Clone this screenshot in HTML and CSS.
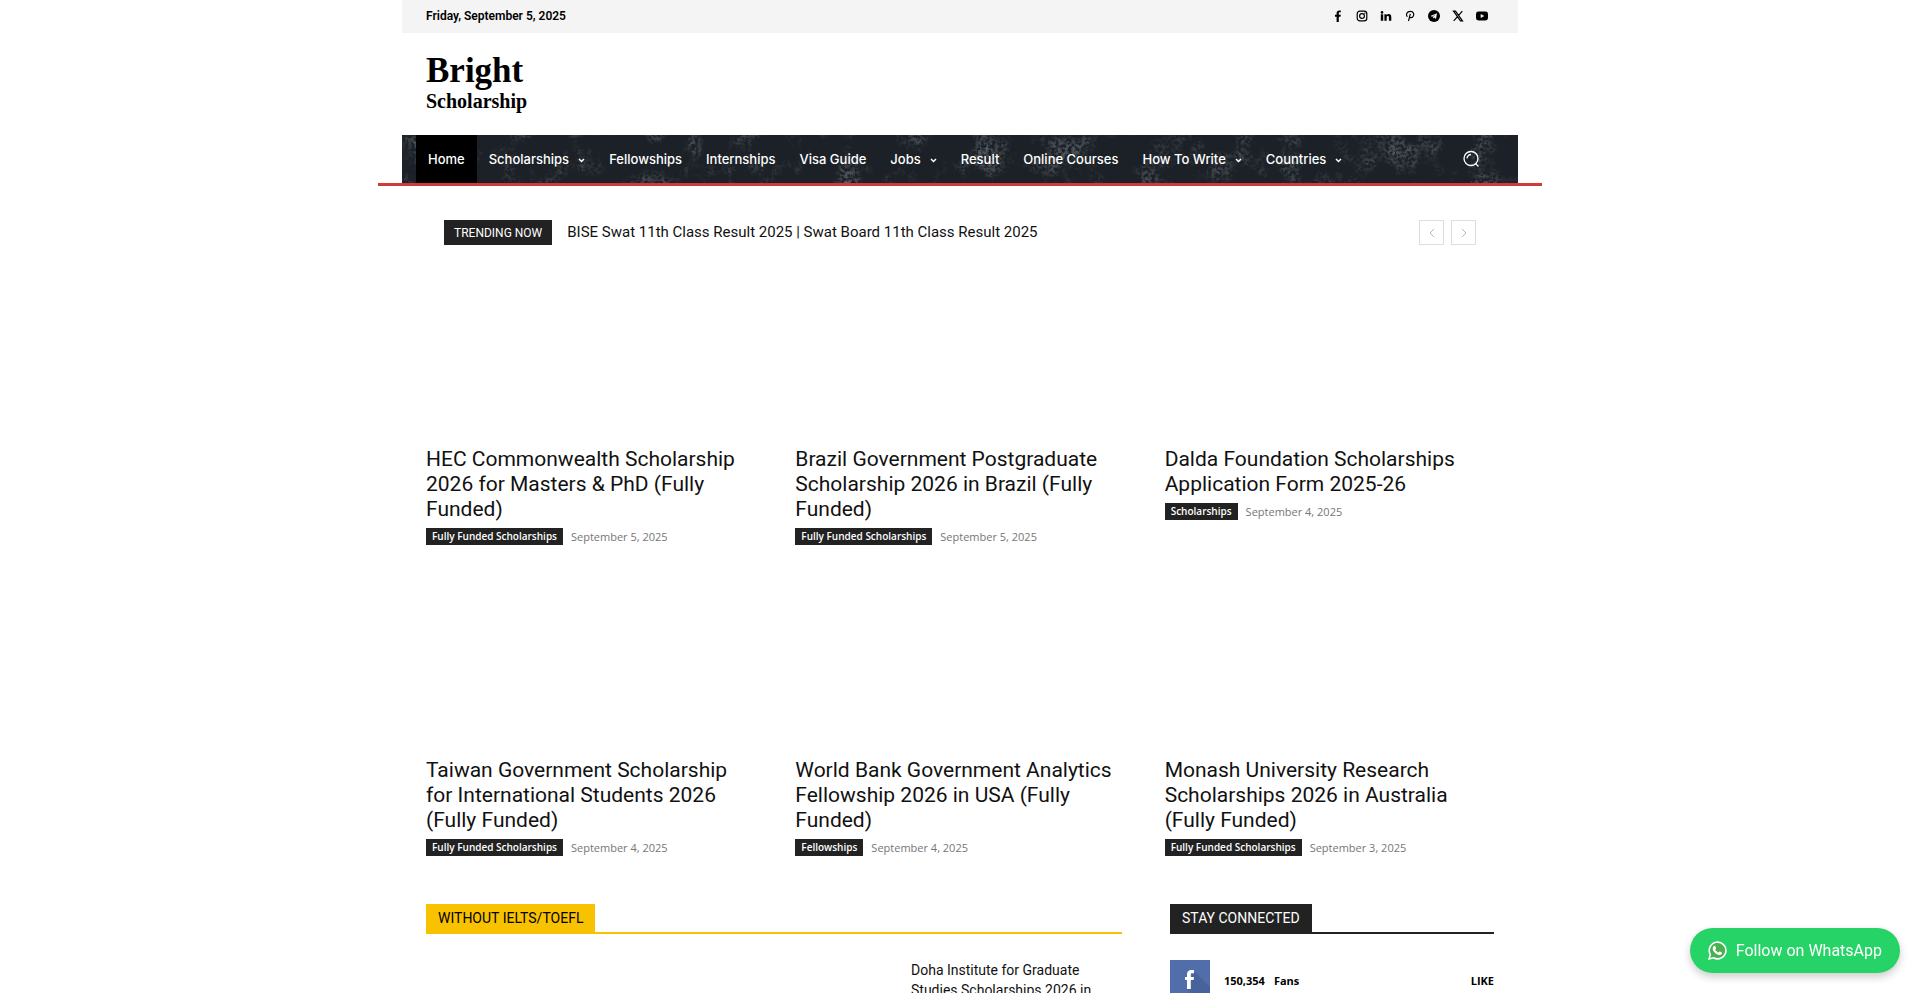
FILE: index.html
```html
<!DOCTYPE html>
<html lang="en">
<head>
    <meta charset="UTF-8">
    <meta name="viewport" content="width=device-width, initial-scale=1.0">
    <title>Bright Scholarship</title>
    <link rel="stylesheet" href="styles.css">
</head>
<body>
    <header class="header">
        <div class="top-bar">
            <span class="date">Friday, September 5, 2025</span>
            <div class="social">
                <a href="#" aria-label="Facebook"><svg viewBox="0 0 12 12"><path d="M4.6 12V6.7H3V4.7h1.6V3.2C4.6 1.300 5.700.4 7.300.4h1.500v1.900h-1c-.8 0-1 .4-1 1v1.400h2l-.3 2H6.800V12z"/></svg></a>
                <a href="#" aria-label="Instagram"><svg viewBox="0 0 12 12" class="line"><rect x="1.200" y="1.200" width="9.600" height="9.600" rx="2.600"/><circle cx="6" cy="6" r="2.400"/><circle cx="8.800" cy="3.200" r=".2"/></svg></a>
                <a href="#" aria-label="LinkedIn"><svg viewBox="0 0 12 12"><circle cx="2" cy="2.400" r="1.300"/><path d="M.8 4.300h2.400v6.400H.8zM4.400 4.300h2.200v.9c.4-.7 1.100-1.100 2-1.100 2 0 2.700 1.200 2.700 3.200v3.400H8.900V7.600c0-1-.2-1.600-1.100-1.600S6.700 6.700 6.700 7.600v3.100H4.400z"/></svg></a>
                <a href="#" aria-label="Pinterest"><svg viewBox="0 0 12 12" class="line"><path d="M3.300 6.800C1.400 4.600 3 1.400 6.200 1.400c3.700 0 4.300 3.200 2.800 5.200C7.900 8 5.900 7.900 5.400 6.700M6.300 3.900L4.500 11"/></svg></a>
                <a href="#" aria-label="Telegram"><svg viewBox="0 0 12 12"><circle cx="6" cy="6" r="6"/><path class="cut" d="M2.400 6L9 3.200 8 9 6.100 7.500 5.100 8.600 4.900 6.900 7.600 4.500 4.200 6.700z"/></svg></a>
                <a href="#" aria-label="X"><svg viewBox="0 0 12 12" class="line"><path d="M1.500 1.200h2l7 9.600h-2zM10.300 1.200L6.700 5.400M5.300 6.800L1.700 10.800"/></svg></a>
                <a href="#" aria-label="YouTube"><svg viewBox="0 0 12 12"><rect y="1.500" width="12" height="9" rx="2.400"/><path class="cut" d="M4.700 3.900L8.300 6 4.700 8.100z"/></svg></a>
            </div>
        </div>

        <a href="#" class="logo">
            <span class="logo-main">Bright</span>
            <span class="logo-sub">Scholarship</span>
        </a>

        <nav class="nav">
            <svg class="nav-texture" aria-hidden="true">
                <filter id="grain" x="0" y="0" width="100%" height="100%">
                    <feTurbulence type="fractalNoise" baseFrequency="0.03 0.025" numOctaves="7" seed="8" result="clouds"/>
                    <feColorMatrix values="0 0 0 0 .36  0 0 0 0 .4  0 0 0 0 .41  1.200 0 0 0 -.580" result="patches"/>
                    <feTurbulence type="fractalNoise" baseFrequency="0.3" numOctaves="3" seed="3"/>
                    <feColorMatrix values="0 0 0 0 1  0 0 0 0 1  0 0 0 0 1  0 4 0 0 -1.500" result="dust"/>
                    <feComposite in="patches" in2="dust" operator="in"/>
                </filter>
                <rect width="100%" height="100%" filter="url(#grain)"/>
            </svg>
            <a href="#" class="active">Home</a>
            <a href="#">Scholarships <svg class="caret" viewBox="0 0 7 5"><path d="M1 1l2.500 2.500L6 1"/></svg></a>
            <a href="#">Fellowships</a>
            <a href="#">Internships</a>
            <a href="#">Visa Guide</a>
            <a href="#">Jobs <svg class="caret" viewBox="0 0 7 5"><path d="M1 1l2.500 2.500L6 1"/></svg></a>
            <a href="#">Result</a>
            <a href="#">Online Courses</a>
            <a href="#">How To Write <svg class="caret" viewBox="0 0 7 5"><path d="M1 1l2.500 2.500L6 1"/></svg></a>
            <a href="#">Countries <svg class="caret" viewBox="0 0 7 5"><path d="M1 1l2.500 2.500L6 1"/></svg></a>
            <button type="button" class="search" aria-label="Search">
                <svg viewBox="0 0 18 18"><circle cx="9" cy="8.500" r="7"/><path d="M13.500 13.500l3 3M5 8.500a4 4 0 0 1 4-4"/></svg>
            </button>
        </nav>
    </header>

    <main class="content">
        <div class="trending">
            <span class="trending-label">TRENDING NOW</span>
            <a href="#" class="trending-title">BISE Swat 11th Class Result 2025 | Swat Board 11th Class Result 2025</a>
            <div class="trending-nav">
                <button type="button" aria-label="Previous"><svg viewBox="0 0 6 10"><path d="M5 1L1 5l4 4"/></svg></button>
                <button type="button" aria-label="Next"><svg viewBox="0 0 6 10"><path d="M1 1l4 4-4 4"/></svg></button>
            </div>
        </div>

        <section class="post-grid">
            <article class="post">
                <div class="thumb"></div>
                <h3><a href="#">HEC Commonwealth Scholarship 2026 for Masters &amp; PhD (Fully Funded)</a></h3>
                <div class="meta"><a href="#" class="category">Fully Funded Scholarships</a><time>September 5, 2025</time></div>
            </article>
            <article class="post">
                <div class="thumb"></div>
                <h3><a href="#">Brazil Government Postgraduate Scholarship 2026 in Brazil (Fully Funded)</a></h3>
                <div class="meta"><a href="#" class="category">Fully Funded Scholarships</a><time>September 5, 2025</time></div>
            </article>
            <article class="post">
                <div class="thumb"></div>
                <h3><a href="#">Dalda Foundation Scholarships Application Form 2025-26</a></h3>
                <div class="meta"><a href="#" class="category">Scholarships</a><time>September 4, 2025</time></div>
            </article>
            <article class="post">
                <div class="thumb"></div>
                <h3><a href="#">Taiwan Government Scholarship for International Students 2026 (Fully Funded)</a></h3>
                <div class="meta"><a href="#" class="category">Fully Funded Scholarships</a><time>September 4, 2025</time></div>
            </article>
            <article class="post">
                <div class="thumb"></div>
                <h3><a href="#">World Bank Government Analytics Fellowship 2026 in USA (Fully Funded)</a></h3>
                <div class="meta"><a href="#" class="category">Fellowships</a><time>September 4, 2025</time></div>
            </article>
            <article class="post">
                <div class="thumb"></div>
                <h3><a href="#">Monash University Research Scholarships 2026 in Australia (Fully Funded)</a></h3>
                <div class="meta"><a href="#" class="category">Fully Funded Scholarships</a><time>September 3, 2025</time></div>
            </article>
        </section>

        <div class="columns">
            <section class="main-col">
                <h4 class="block-title yellow"><span>WITHOUT IELTS/TOEFL</span></h4>
                <div class="post-list">
                    <div class="featured"></div>
                    <article class="small-post">
                        <div class="small-thumb"></div>
                        <h3><a href="#">Doha Institute for Graduate Studies Scholarships 2026 in</a></h3>
                    </article>
                </div>
            </section>
            <aside class="side-col">
                <h4 class="block-title"><span>STAY CONNECTED</span></h4>
                <div class="counter">
                    <span class="fb">
                        <svg viewBox="0 0 40 40"><path class="fb-shade" d="M24 11L40 27v13H27L17 29z"/><path class="fb-glyph" d="M17 29V20h-2v-3h2v-2.500c0-3 1.600-4.500 4.400-4.500H24v3.300h-1.800c-1 0-1.400.5-1.400 1.400V17H24l-.4 3h-2.800v9z"/></svg>
                    </span>
                    <span class="count">150,354</span>
                    <span>Fans</span>
                    <a href="#">LIKE</a>
                </div>
            </aside>
        </div>
    </main>

    <a href="#" class="whatsapp">
        <svg viewBox="0 0 18 18"><path class="wa-ring" d="M1 17l1.200-4.100A7.900 7.900 0 1 1 5.200 15.900z"/><path class="wa-phone" d="M6.300 4.600c.4 0 .5.100.7.600l.6 1.400c.1.300 0 .5-.8 1.400.7 1.400 1.700 2.300 3.200 3 .9-1 1-1.200 1.400-1l1.600.8c.4.200.4.300.3.900-.2 1-1.300 1.700-2.400 1.600-3.500-.5-6.700-3.900-6.400-6.500.1-.9.900-2.200 1.800-2.200z"/></svg>
        Follow on WhatsApp
    </a>
</body>
</html>
```
FILE: styles.css
```css
* {
    box-sizing: border-box;
}

body {
    margin: 0;
    height: 100vh;
    overflow: hidden;
    background: #fff;
    color: #111;
    font-family: Roboto, sans-serif;
}

a {
    color: inherit;
    text-decoration: none;
}

button {
    padding: 0;
    background: none;
    border: none;
    cursor: pointer;
}

h3, h4 {
    margin: 0;
    font-weight: 400;
}

/* Header */
.header {
    max-width: 1164px;
    margin: 0 auto;
    padding: 0 24px;
    border-bottom: 3px solid #d13a3a;
}

.top-bar {
    display: flex;
    justify-content: space-between;
    align-items: center;
    height: 33px;
    padding: 0 24px 2px;
    background: #f4f4f4;
}

.date {
    font-size: 12px;
    font-weight: 600;
    color: #000;
}

.social {
    display: flex;
}

.social a {
    display: flex;
    justify-content: center;
    width: 24px;
}

.social svg {
    width: 12px;
    height: 12px;
}

.social .line {
    fill: none;
    stroke: #000;
    stroke-width: 1.2;
}

.social .cut {
    fill: #f4f4f4;
}

.logo {
    display: flex;
    flex-direction: column;
    height: 102px;
    padding: 18px 24px;
    color: #000;
    font-family: "Liberation Serif", serif;
    font-weight: 700;
}

.logo-main {
    font-size: 35px;
    line-height: 40px;
}

.logo-sub {
    font-size: 20px;
    line-height: 20px;
}

.nav {
    position: relative;
    display: flex;
    height: 48px;
    padding: 0 38px 0 14px;
    background: #1b2127;
    color: #fff;
    font-family: Inter, sans-serif;
    font-size: 13px;
    font-weight: 500;
}

.nav-texture {
    position: absolute;
    inset: 0;
    width: 100%;
    height: 100%;
}

.nav a {
    position: relative;
    display: flex;
    align-items: center;
    gap: 9px;
    padding: 0 12px;
    white-space: nowrap;
}

.nav .active {
    background: #000;
}

.caret {
    width: 7px;
    height: 5px;
    margin-top: 2px;
    fill: none;
    stroke: #fff;
    stroke-width: 1.5;
}

.search {
    position: relative;
    display: flex;
    align-items: center;
    margin-left: auto;
}

.search svg {
    width: 18px;
    height: 18px;
    fill: none;
    stroke: #fff;
    stroke-width: 1.3;
}

/* Content */
.content {
    max-width: 1116px;
    margin: 0 auto;
    padding: 34px 24px 0;
}

.trending {
    display: flex;
    align-items: center;
    padding: 0 18px;
}

.trending-label {
    padding: 1px 10px 0;
    background: #222;
    color: #fff;
    font-size: 12px;
    line-height: 24px;
}

.trending-title {
    margin-left: 15px;
    padding-bottom: 1px;
    font-size: 15px;
    line-height: 24px;
}

.trending-nav {
    display: flex;
    gap: 7px;
    margin-left: auto;
}

.trending-nav button {
    display: flex;
    justify-content: center;
    align-items: center;
    width: 25px;
    height: 25px;
    border: 1px solid #ddd;
}

.trending-nav svg {
    width: 6px;
    height: 10px;
    fill: none;
    stroke: #b5b5b5;
}

.post-grid {
    display: grid;
    grid-template-columns: repeat(3, 1fr);
    gap: 11px 40px;
}

.thumb {
    height: 198px;
}

.post h3 {
    margin: 4px 0 6px;
    font-size: 21px;
    line-height: 25px;
}

.meta {
    display: flex;
    align-items: center;
    gap: 8px;
    font-family: "Open Sans", sans-serif;
    font-size: 11px;
    line-height: 17px;
    color: #767676;
}

.category {
    padding: 0 6px;
    background: #222;
    color: #fff;
    font-size: 10px;
    font-weight: 600;
}

.columns {
    display: grid;
    grid-template-columns: 696fr 324fr;
    gap: 48px;
    margin-top: 48px;
}

.block-title {
    display: flex;
    margin-bottom: 26px;
    border-bottom: 2px solid #222;
    font-size: 14px;
    line-height: 28px;
}

.block-title span {
    padding: 0 12px;
    background: #222;
    color: #fff;
}

.block-title.yellow {
    border-color: #f8c200;
}

.block-title.yellow span {
    background: #f8c200;
    color: #000;
}

.post-list {
    display: grid;
    grid-template-columns: 1fr 1fr;
    gap: 48px;
}

.small-post {
    display: flex;
    gap: 16px;
}

.small-thumb {
    flex: none;
    width: 97px;
}

.small-post h3 {
    font-size: 14px;
    line-height: 20px;
}

.counter {
    display: flex;
    align-items: center;
    color: #000;
    font-family: "Open Sans", sans-serif;
    font-size: 11px;
    font-weight: 700;
}

.counter a {
    margin-left: auto;
}

.fb {
    width: 40px;
    height: 40px;
    background: #516eab;
}

.fb-shade {
    fill: #48639b;
}

.fb-glyph {
    fill: #fff;
}

.count {
    margin: 0 9px 0 14px;
}

/* Floating button */
.whatsapp {
    position: fixed;
    right: 20px;
    bottom: 20px;
    display: flex;
    align-items: center;
    gap: 9px;
    padding: 0 18px;
    border-radius: 50px;
    background: #25d366;
    box-shadow: 0 4px 8px rgba(0, 0, 0, 0.2);
    color: #fff;
    font-size: 16px;
    line-height: 45px;
}

.whatsapp svg {
    width: 19px;
    height: 19px;
}

.wa-ring {
    fill: #4caf50;
    stroke: #fff;
    stroke-width: 1.5;
}

.wa-phone {
    fill: #fff;
}
```
